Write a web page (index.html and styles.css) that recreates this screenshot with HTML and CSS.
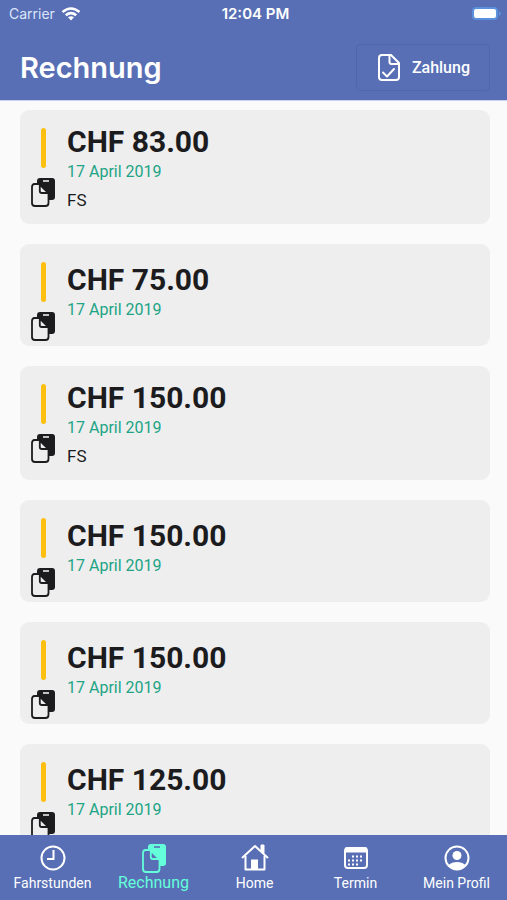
FILE: index.html
```html
<!DOCTYPE html>
<html lang="de">
<head>
<meta charset="utf-8">
<meta name="viewport" content="width=device-width, initial-scale=1">
<title>Rechnung</title>
<link rel="stylesheet" href="styles.css">
</head>
<body>
<svg class="sprite" aria-hidden="true">
  <symbol id="copy" viewBox="0 0 26 30">
    <path d="M10 1h12q3 0 3 3v16q0 3-3 3H12V8H7V4q0-3 3-3z" fill="currentColor"/>
    <path d="M13 4h6" class="slot" stroke-width="1.6"/>
    <path d="M10 7H4.500Q2 7 2 10v16q0 3 3 3h10.500q3 0 3-3V16z" class="sheet" stroke="currentColor" stroke-width="1.8"/>
    <path d="M9.800 7.500v6.500q0 2 2 2h6.500z" class="sheet" stroke="currentColor" stroke-width="1.8" stroke-linejoin="round"/>
  </symbol>
</svg>
<header class="top">
  <div class="status">
    <span class="carrier">Carrier
      <svg width="20" height="14" viewBox="0 0 20 14" fill="none" stroke="#fff" stroke-width="2.6"><path d="M1.500 5Q10-2 18.500 5M4.800 8.300Q10 4 15.200 8.300"/><path d="M10 13.500 7 10.300q3-2.300 6 0z" fill="#fff" stroke="none"/></svg>
    </span>
    <span class="time">12:04 PM</span>
    <span class="battery"><svg width="31" height="16" viewBox="0 0 31 16"><rect x="1" y="1" width="26" height="13" rx="4" fill="#5b91dc"/><rect x="3" y="3" width="22" height="9" rx="2" fill="#fff"/><path d="M28 5q4 2.500 0 5z" fill="#5b91dc"/></svg></span>
  </div>
  <div class="bar">
    <h1>Rechnung</h1>
    <button class="pay" type="button">
      <svg width="22" height="27" viewBox="0 0 22 27" fill="none" stroke="#fff" stroke-width="2" stroke-linejoin="round" stroke-linecap="round"><path d="M13 1H4Q1 1 1 4v19q0 3 3 3h14q3 0 3-3V9z"/><path d="M11.500 1v7q0 2 2 2H20M5 18.500l4 4 7-7.500"/></svg>
      Zahlung
    </button>
  </div>
</header>
<main class="list">
  <article class="card"><div class="side"><i class="mark"></i><svg class="copy"><use href="#copy"/></svg></div><div class="info"><h2>CHF 83.00</h2><time>17 April 2019</time><p>FS</p></div></article>
  <article class="card"><div class="side"><i class="mark"></i><svg class="copy"><use href="#copy"/></svg></div><div class="info"><h2>CHF 75.00</h2><time>17 April 2019</time><p></p></div></article>
  <article class="card"><div class="side"><i class="mark"></i><svg class="copy"><use href="#copy"/></svg></div><div class="info"><h2>CHF 150.00</h2><time>17 April 2019</time><p>FS</p></div></article>
  <article class="card"><div class="side"><i class="mark"></i><svg class="copy"><use href="#copy"/></svg></div><div class="info"><h2>CHF 150.00</h2><time>17 April 2019</time><p></p></div></article>
  <article class="card"><div class="side"><i class="mark"></i><svg class="copy"><use href="#copy"/></svg></div><div class="info"><h2>CHF 150.00</h2><time>17 April 2019</time><p></p></div></article>
  <article class="card"><div class="side"><i class="mark"></i><svg class="copy"><use href="#copy"/></svg></div><div class="info"><h2>CHF 125.00</h2><time>17 April 2019</time><p></p></div></article>
</main>
<nav class="tabs">
  <a href="#fahrstunden"><svg width="26" height="26" viewBox="0 0 26 26" fill="none" stroke="currentColor" stroke-width="2"><circle cx="13" cy="13" r="11.500"/><path d="M13.500 5v9H7"/></svg>Fahrstunden</a>
  <a href="#rechnung" class="active" aria-current="page"><svg class="copy"><use href="#copy"/></svg>Rechnung</a>
  <a href="#home"><svg width="30" height="28" viewBox="0 0 30 28" fill="none" stroke="currentColor" stroke-width="2" stroke-linejoin="round"><path d="M2 15 15 3l13 12"/><path d="M5.500 13v13.500h19V13"/><path d="M21 7V2h3v8z" fill="currentColor" stroke-width="1"/><path d="M11 16.500h7V27h-7z" fill="currentColor" stroke="none"/></svg>Home</a>
  <a href="#termin"><svg width="26" height="26" viewBox="0 0 26 26" fill="none" stroke="currentColor"><rect x="2" y="3" width="22" height="20" rx="3" stroke-width="2"/><path d="M2 5h22" stroke-width="5"/><path d="M9 11.500h12M5 15.500h16M5 19.500h12" stroke-width="2" stroke-dasharray="2 2"/></svg>Termin</a>
  <a href="#profil"><svg width="26" height="26" viewBox="0 0 26 26"><circle cx="13" cy="13" r="11.500" fill="none" stroke="currentColor" stroke-width="2"/><circle cx="13" cy="10.500" r="4.500" fill="currentColor"/><path d="M4.500 20q3.500-3 8.500-3t8.500 3q-3 5-8.500 5t-8.500-5z" fill="currentColor"/></svg>Mein Profil</a>
</nav>
</body>
</html>
```
FILE: styles.css
```css
* { box-sizing: border-box; margin: 0; }
body {
  height: 100vh;
  display: flex;
  flex-direction: column;
  background: #fafafa;
  color: #1c1c1e;
  font-family: Roboto, sans-serif;
}
.sprite { position: absolute; width: 0; height: 0; }
.slot { stroke: var(--paper, #eee); }
.sheet { fill: var(--paper, #eee); }
.top {
  flex: none;
  background: #586fb5;
  color: #fff;
  border-bottom: 1px solid #c9d1ee;
}
.status {
  display: grid;
  grid-template-columns: 1fr auto 1fr;
  align-items: center;
  height: 28px;
  padding: 0 5px 0 9px;
  font: 14px/20px Inter, sans-serif;
}
.carrier { display: flex; align-items: center; gap: 6px; color: #dce5fa; }
.time { font-weight: 600; font-size: 15px; }
.battery { display: flex; justify-content: flex-end; }
.bar {
  display: flex;
  align-items: center;
  justify-content: space-between;
  padding: 16px 17px 9px 20px;
}
h1 { font: 600 29px/40px Inter, sans-serif; }
.pay {
  display: flex;
  align-items: center;
  gap: 12px;
  height: 47px;
  padding: 0 19px 0 21px;
  border: 1px solid #5067ad;
  border-radius: 4px;
  background: transparent;
  color: #fff;
  font: 500 16px/20px Roboto, sans-serif;
}
.list {
  flex: 1;
  min-height: 0;
  overflow: hidden;
  display: flex;
  flex-direction: column;
  gap: 20px;
  padding: 9px 17px 0 20px;
}
.card {
  flex: none;
  display: flex;
  border-radius: 9px;
  background: #eee;
}
.side {
  flex: none;
  display: flex;
  flex-direction: column;
  align-items: center;
  gap: 9px;
  width: 47px;
  padding: 18px 1px 5px 0;
}
.mark { width: 5px; height: 40px; border-radius: 3px; background: #fdc010; }
.copy { width: 26px; height: 30px; }
.info { align-self: center; padding: 14px 0 12px; }
h2 { font: 700 30px/36px Roboto, sans-serif; }
time { display: block; color: #21a485; font-size: 16px; line-height: 24px; }
.info p { padding: 6px 0 2px; font-size: 17px; line-height: 20px; }
.tabs {
  flex: none;
  display: grid;
  grid-template-columns: repeat(5, 1fr);
  height: 65px;
  padding-left: 2px;
  background: #586fb5;
}
.tabs a {
  display: flex;
  flex-direction: column;
  align-items: center;
  justify-content: flex-end;
  gap: 2px;
  padding-bottom: 7px;
  color: #fff;
  font-size: 14px;
  line-height: 20px;
  text-decoration: none;
  white-space: nowrap;
}
.tabs .active {
  --paper: #586fb5;
  gap: 0;
  color: #64ffda;
  font-size: 16px;
}
```
